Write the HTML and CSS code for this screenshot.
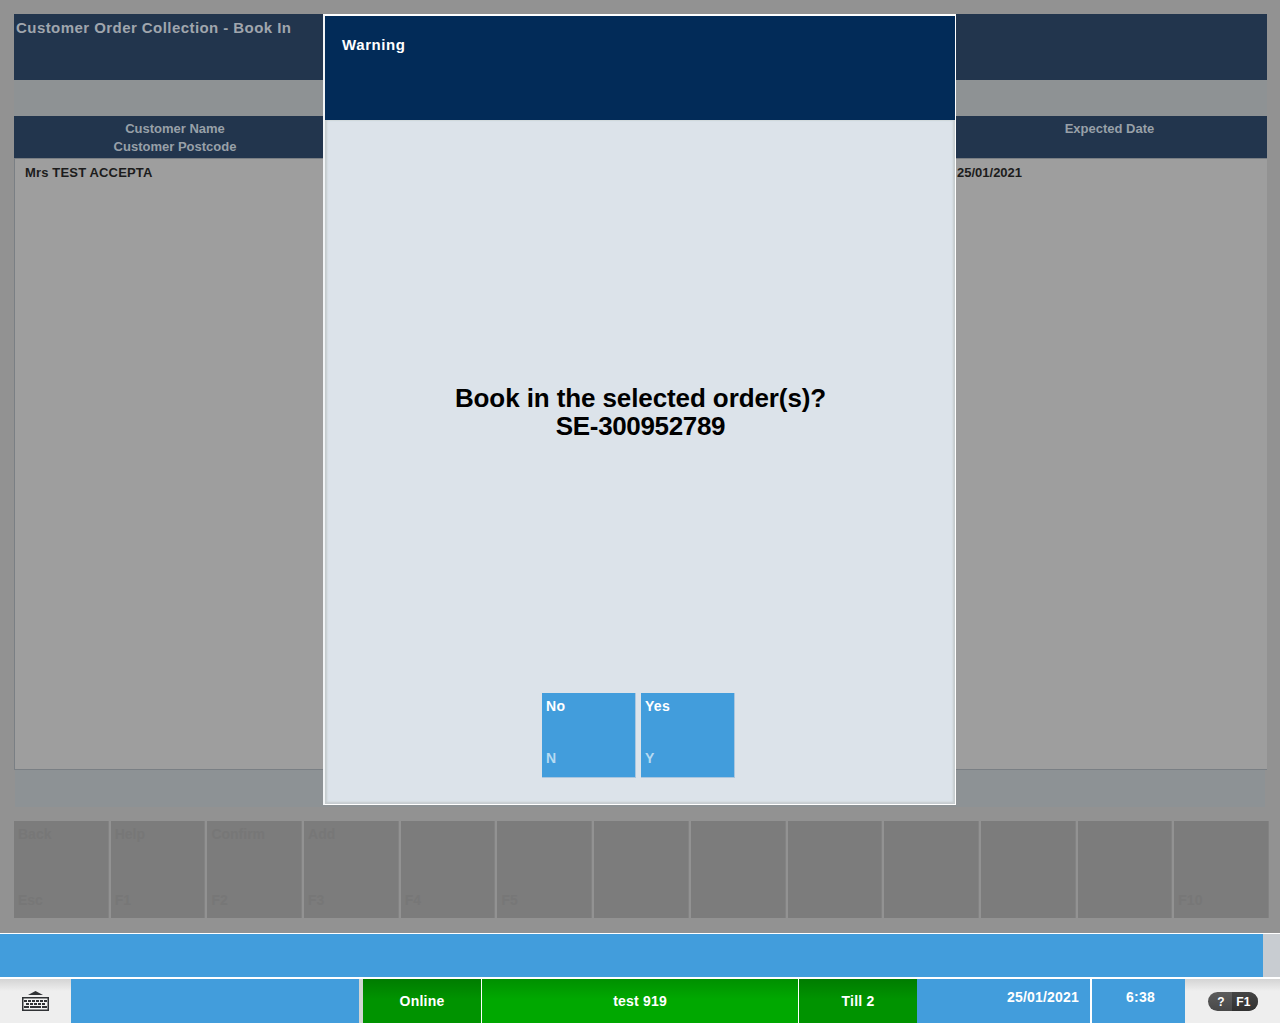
FILE: index.html
```html
<!DOCTYPE html>
<html lang="en">
<head>
<meta charset="utf-8">
<title>Customer Order Collection - Book In</title>
<link rel="stylesheet" href="styles.css">
</head>
<body>
<main class="screen">
  <header class="title">Customer Order Collection - Book In</header>
  <div class="columns">
    <div class="col-name">Customer Name<br>Customer Postcode</div>
    <div class="col-date">Expected Date</div>
  </div>
  <div class="rows">
    <div class="row"><span class="cell-name">Mrs TEST ACCEPTA</span><span>25/01/2021</span></div>
  </div>
  <div class="filler"></div>
  <div class="keys">
    <div class="key"><span>Back</span><span>Esc</span></div>
    <div class="key"><span>Help</span><span>F1</span></div>
    <div class="key"><span>Confirm</span><span>F2</span></div>
    <div class="key"><span>Add</span><span>F3</span></div>
    <div class="key"><span></span><span>F4</span></div>
    <div class="key"><span></span><span>F5</span></div>
    <div class="key"></div>
    <div class="key"></div>
    <div class="key"></div>
    <div class="key"></div>
    <div class="key"></div>
    <div class="key"></div>
    <div class="key"><span></span><span>F10</span></div>
  </div>
</main>
<section class="dialog">
  <header class="dialog-title">Warning</header>
  <div class="dialog-body">
    <p class="question">Book in the selected order(s)?<br><span class="order">SE-300952789</span></p>
    <div class="answers">
      <button class="answer"><span>No</span><span class="hotkey">N</span></button>
      <button class="answer"><span>Yes</span><span class="hotkey">Y</span></button>
    </div>
  </div>
</section>
<div class="message"></div>
<footer class="status">
  <div class="keyboard">
    <svg width="27" height="20" viewBox="0 0 27 20">
      <path d="M6 4 13.500 0 21 4z" fill="#303235"/>
      <rect x=".75" y="6.75" width="25.500" height="12.500" fill="#f4f4f4" stroke="#303235" stroke-width="1.500"/>
      <g fill="none" stroke="#303235" stroke-width="2">
        <path d="M2 10h23" stroke-dasharray="3 1"/>
        <path d="M4 13h19" stroke-dasharray="3 1"/>
        <path d="M2 16h5m1 0h11m1 0h5"/>
      </g>
    </svg>
  </div>
  <div class="blank"></div>
  <div class="online">Online</div>
  <div class="user">test 919</div>
  <div class="till">Till 2</div>
  <div class="date">25/01/2021</div>
  <div class="time">6:38</div>
  <div class="help"><div class="pill"><span>?</span><span class="pill-key">F1</span></div></div>
</footer>
</body>
</html>
```

FILE: styles.css
```css
* { box-sizing: border-box; }
body {
  margin: 0;
  width: 1280px;
  height: 1024px;
  overflow: hidden;
  position: relative;
  background: #fff;
  font: bold 13px/18px "Liberation Sans", Arial, sans-serif;
}
.screen {
  height: 933px;
  padding: 14px 10px 0 14px;
  background: #929292;
}
.title {
  width: 1253px;
  height: 66px;
  padding: 5px 2px;
  background: #22354d;
  color: #a0a6ad;
  font-size: 15px;
  letter-spacing: .44px;
}
.columns {
  display: flex;
  width: 1253px;
  height: 78px;
  border-top: 36px solid #8e9294;
  background: #22354d;
  color: #98a0a8;
  text-align: center;
  padding-top: 4px;
}
.col-name { width: 322px; }
.col-date { width: 228px; margin-left: 659px; margin-right: 44px; padding-left: 1px; flex: none; }
.rows {
  width: 1253px;
  height: 612px;
  padding-top: 5px;
  border: solid #7a7f84;
  border-width: 1px 0 1px 1px;
  background: #9e9e9e;
  color: #1c1c1c;
}
.row { display: flex; padding-left: 10px; }
.cell-name { width: 932px; letter-spacing: .16px; }
.filler {
  width: 1250px;
  height: 37px;
  margin-left: 1px;
  background: #8d9295;
}
.keys {
  display: grid;
  grid-template-columns: repeat(13, 1fr);
  column-gap: 2px;
  width: 1255px;
  height: 97px;
  margin-top: 14px;
}
.key {
  display: flex;
  flex-direction: column;
  justify-content: space-between;
  padding: 4px 4px 9px;
  background: #7c7c7c;
  border-right: 1px solid #838383;
  color: #777;
  font-size: 14px;
  line-height: 18px;
}
.dialog {
  position: absolute;
  left: 323px;
  top: 14px;
  width: 633px;
  height: 791px;
  border: 1px solid #fff;
  border-left-width: 2px;
  border-top-width: 2px;
  border-left-color: #f1f4f6;
  display: flex;
  flex-direction: column;
  background: #dce3ea;
}
.dialog-title {
  height: 104px;
  flex: none;
  padding: 20px 17px;
  background: #022b58;
  color: #fff;
  font-size: 15px;
  letter-spacing: .6px;
}
.dialog-body {
  flex: 1;
  display: flex;
  flex-direction: column;
  align-items: center;
  justify-content: space-between;
  padding: 264px 0 26px;
  box-shadow: inset 0 -2px 2px #c6cccf, inset 2px 0 2px #c6cccf, inset -2px 0 2px #c6cccf;
}
.question {
  margin: 0 0 0 1px;
  color: #000;
  font-size: 26px;
  line-height: 28px;
  letter-spacing: -.1px;
  text-align: center;
}
.order { letter-spacing: -.35px; }
.answers { display: flex; gap: 5px; margin-right: 3px; }
.answer {
  display: flex;
  flex-direction: column;
  justify-content: space-between;
  align-items: flex-start;
  width: 94px;
  height: 85px;
  padding: 4px 4px 10px;
  border: solid #a9c6df;
  border-width: 0 1px 1px 0;
  background: #429ddc;
  color: #fff;
  font: bold 14px/18px "Liberation Sans", Arial, sans-serif;
  letter-spacing: .3px;
}
.hotkey { color: #b6dbf2; }
.message {
  height: 45px;
  border: solid #fff;
  border-width: 1px 0;
  background: linear-gradient(90deg, #429ddc 1263px, #c8ccd1 1263px);
}
.status {
  display: flex;
  height: 46px;
  padding: 1px 0;
  background: #fff;
  color: #fff;
  font-size: 14px;
  line-height: 18px;
  letter-spacing: .2px;
}
.status > div { flex: none; height: 44px; }
.keyboard, .help {
  display: flex;
  align-items: center;
  justify-content: center;
  background: linear-gradient(#d4d4d4, #eee 12px);
}
.keyboard { width: 71px; }
.blank { width: 288px; margin-right: 4px; background: #429ddc; }
.status .blank { box-shadow: 4px 0 #d2d5d4; }
.online, .user, .till { padding-top: 13px; text-align: center; }
.online, .till { width: 118px; background: linear-gradient(#007c00, #009300 20px); }
.user { width: 316px; margin: 0 1px; background: linear-gradient(#009000, #00a800 20px); }
.date {
  width: 173px;
  padding: 9px 11px 0 0;
  text-align: right;
  background: #429ddc;
}
.time {
  width: 93px;
  margin: 0 0 0 2px;
  padding: 9px 0 0 4px;
  text-align: center;
  background: #429ddc;
}
.help { width: 95px; }
.pill {
  display: flex;
  width: 50px;
  height: 19px;
  border-radius: 10px;
  overflow: hidden;
  background: linear-gradient(#5d5d5d, #484848);
  font-size: 12px;
  line-height: 20px;
  text-align: center;
}
.pill span { width: 24px; padding-left: 3px; }
.pill .pill-key { width: 26px; padding: 0 2px 0 0; background: linear-gradient(#454545, #303030); }
```
